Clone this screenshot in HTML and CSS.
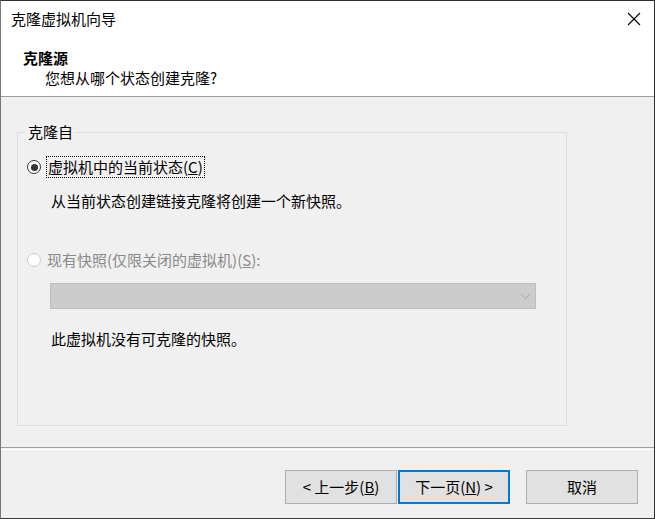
FILE: index.html
```html
<!DOCTYPE html>
<html lang="zh-CN">
<head>
<meta charset="utf-8">
<title>克隆虚拟机向导</title>
<link rel="stylesheet" href="styles.css">
</head>
<body>
<div class="window">
  <div class="header">
    <div class="titlebar">
      <span class="title">克隆虚拟机向导</span>
      <span class="close">
        <svg width="14" height="14" viewBox="0 0 14 14"><path d="M1 1 L13 13 M13 1 L1 13" stroke="#000" stroke-width="1.1" fill="none"/></svg>
      </span>
    </div>
    <div class="h-title">克隆源</div>
    <div class="h-sub">您想从哪个状态创建克隆?</div>
  </div>
  <div class="content">
    <fieldset class="group">
      <legend class="legend">克隆自</legend>
      <div class="radio-row first">
        <span class="radio checked"></span>
        <span class="label focus">虚拟机中的当前状态(<u>C</u>)</span>
      </div>
      <div class="desc d1">从当前状态创建链接克隆将创建一个新快照。</div>
      <div class="radio-row second disabled">
        <span class="radio"></span>
        <span class="label">现有快照(仅限关闭的虚拟机)(<u>S</u>):</span>
      </div>
      <div class="combo">
        <svg width="11" height="7" viewBox="0 0 11 7"><path d="M0.5 0.5 L5.5 5.5 L10.5 0.5" stroke="#a8a8a8" stroke-width="1" fill="none"/></svg>
      </div>
      <div class="desc d2">此虚拟机没有可克隆的快照。</div>
    </fieldset>
  </div>
  <div class="footer">
    <button class="btn">&lt; 上一步(<u>B</u>)</button>
    <button class="btn default">下一页(<u>N</u>) &gt;</button>
    <button class="btn cancel">取消</button>
  </div>
</div>
</body>
</html>
```
FILE: styles.css
```css
html, body {
  margin: 0;
  padding: 0;
  background: #f0f0f0;
}
.window {
  width: 655px;
  height: 519px;
  box-sizing: border-box;
  border: 1px solid #777777;
  border-top-color: #2e2e2e;
  border-right-color: #2e2e2e;
  border-bottom-color: #3a3a3a;
  background: #f0f0f0;
  font-family: "Noto Sans CJK SC", "Noto Sans", sans-serif;
  font-size: 15px;
  line-height: 20px;
  color: #000;
  display: flex;
  flex-direction: column;
}
.header {
  background: #ffffff;
  border-bottom: 1px solid #a0a0a0;
  padding-bottom: 8px;
}
.titlebar {
  height: 36px;
  display: flex;
  align-items: center;
  justify-content: space-between;
}
.title {
  padding-left: 10px;
}
.close {
  width: 40px;
  height: 36px;
  display: flex;
  align-items: center;
  justify-content: center;
}
.h-title {
  margin-top: 11px;
  padding-left: 22px;
  font-weight: bold;
}
.h-sub {
  padding-left: 44px;
}
.content {
  flex: 1;
  padding: 25px 0 0 16px;
}
.group {
  margin: 0;
  padding: 0;
  width: 550px;
  height: 304px;
  box-sizing: border-box;
  border: 1px solid #dcdcdc;
  min-width: 0;
}
.legend {
  margin-left: 7px;
  padding: 0 3px;
  line-height: 20px;
}
.radio-row {
  display: flex;
  align-items: center;
  height: 20px;
}
.radio-row.first {
  margin-top: 15px;
}
.radio-row.second {
  margin-top: 39px;
}
.radio {
  flex: none;
  width: 14px;
  height: 14px;
  box-sizing: border-box;
  border-radius: 50%;
  border: 1.5px solid #333333;
  background: #ffffff;
  margin-left: 9px;
  margin-right: 6px;
  display: flex;
  align-items: center;
  justify-content: center;
}
.radio.checked::after {
  content: "";
  width: 7px;
  height: 7px;
  border-radius: 50%;
  background: #333333;
}
.disabled .radio {
  border-color: #cccccc;
}
.disabled .label {
  color: #8a8a8a;
}
.label.focus {
  outline: 1px dotted #000;
  outline-offset: 0;
  padding: 0 1px;
  line-height: 20px;
}
.desc {
  padding-left: 33px;
}
.d1 {
  margin-top: 14px;
}
.d2 {
  margin-top: 20px;
}
.combo {
  margin: 13px 0 0 32px;
  width: 486px;
  height: 26px;
  box-sizing: border-box;
  background: #cccccc;
  border: 1px solid #bcbcbc;
  display: flex;
  align-items: center;
  justify-content: flex-end;
  padding-right: 4px;
}
.footer {
  height: 71px;
  box-sizing: border-box;
  border-top: 1px solid #a0a0a0;
  box-shadow: inset 0 1px 0 #f0f0f0, inset 0 2px 0 #ffffff;
  display: flex;
  justify-content: flex-end;
  align-items: flex-start;
  padding: 22px 16px 0 0;
}
.btn {
  width: 112px;
  height: 34px;
  box-sizing: border-box;
  background: #e1e1e1;
  border: 1px solid #adadad;
  font-family: "Noto Sans CJK SC", "Noto Sans", sans-serif;
  font-size: 15px;
  line-height: 20px;
  color: #000;
  padding: 0;
  margin: 0 0 0 1px;
}
.btn.default {
  border: 2px solid #0078d7;
}
.btn.cancel {
  margin-left: 16px;
}
```
